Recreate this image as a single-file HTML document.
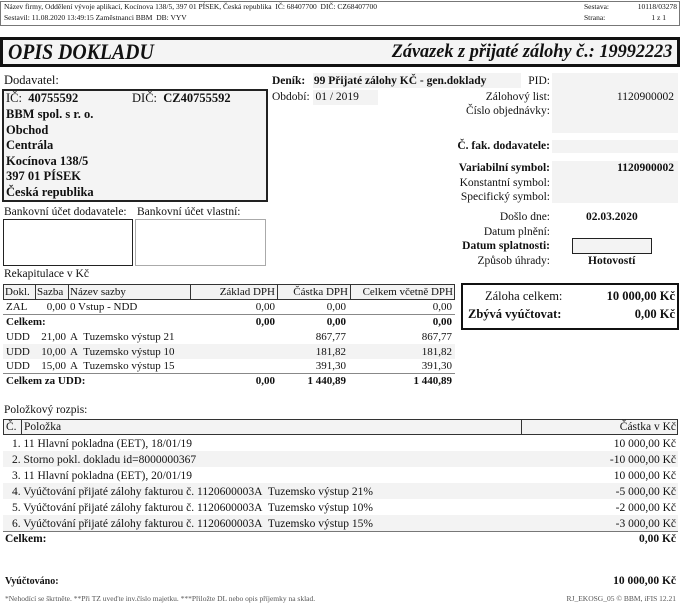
<!DOCTYPE html>
<html><head><meta charset="utf-8"><style>
*{margin:0;padding:0;box-sizing:border-box}
body{width:680px;height:604px;background:#fff;position:relative;overflow:hidden;font-family:"Liberation Serif","DejaVu Serif",serif;font-size:11.5px;color:#111}
.a{position:absolute;white-space:nowrap;line-height:14px}
.b{font-weight:bold}
.r{text-align:right}
.g{position:absolute;background:#f3f3f3}
.sm{font-size:7.5px;line-height:10px}
.t{font-size:11px}
</style></head><body>
<!-- header -->
<div style="position:absolute;left:0;top:1px;width:680px;height:25px;border:1px solid #777"></div>
<div class="a sm" style="left:4px;top:2px">Název firmy, Oddělení vývoje aplikací, Kocínova 138/5, 397 01 PÍSEK, Česká republika&nbsp; IČ: 68407700&nbsp; DIČ: CZ68407700</div>
<div class="a sm" style="left:4px;top:13px">Sestavil: 11.08.2020 13:49:15 Zaměstnanci BBM&nbsp; DB: VYV</div>
<div class="a sm" style="left:584px;top:2px">Sestava:</div>
<div class="a sm" style="left:584px;top:13px">Strana:</div>
<div class="a sm r" style="left:620px;width:57px;top:2px">10118/03278</div>
<div class="a sm r" style="left:620px;width:46px;top:13px">1 z 1</div>
<!-- title -->
<div style="position:absolute;left:0;top:37px;width:680px;height:30px;border:3px solid #111;background:#f4f4f4"></div>
<div class="a b" style="left:8px;top:40px;font-size:22px;line-height:24px;font-style:italic;transform:scaleX(0.9);transform-origin:left">OPIS DOKLADU</div>
<div class="a b r" style="right:8px;top:41px;font-size:19px;line-height:22px;font-style:italic;transform:scaleX(0.96);transform-origin:right">Závazek z přijaté zálohy č.: 19992223</div>
<!-- dodavatel -->
<div class="a" style="left:4px;top:73px;font-size:12.5px">Dodavatel:</div>
<div style="position:absolute;left:2px;top:89px;width:266px;height:113px;border:2px solid #222;background:#f4f4f4"></div>
<div class="a" style="left:6px;top:91px;font-size:12.5px">IČ:&nbsp; <b>40755592</b></div>
<div class="a" style="left:132px;top:91px;font-size:12.5px">DIČ:&nbsp; <b>CZ40755592</b></div>
<div class="a b" style="left:6px;top:107px;font-size:12.5px;line-height:15.5px">BBM spol. s r. o.<br>Obchod<br>Centrála<br>Kocínova 138/5<br>397 01 PÍSEK<br>Česká republika</div>
<div class="a" style="left:4px;top:205px">Bankovní účet dodavatele:</div>
<div class="a" style="left:137px;top:205px">Bankovní účet vlastní:</div>
<div style="position:absolute;left:3px;top:219px;width:130px;height:47px;border:1px solid #222"></div>
<div style="position:absolute;left:135px;top:219px;width:131px;height:47px;border:1px solid #aaa"></div>
<!-- middle/right -->
<div class="g" style="left:313px;top:73px;width:208px;height:15px"></div>
<div class="a b" style="left:272px;top:74px">Deník:&nbsp;&nbsp; 99 Přijaté zálohy KČ - gen.doklady</div>
<div class="a r" style="left:480px;width:70px;top:74px">PID:</div>
<div class="g" style="left:313px;top:90px;width:65px;height:15px"></div>
<div class="a" style="left:272px;top:90px">Období:&nbsp; 01 / 2019</div>
<div class="g" style="left:552px;top:73px;width:126px;height:60px"></div>
<div class="a r" style="left:400px;width:150px;top:90px">Zálohový list:</div>
<div class="a r" style="left:560px;width:114px;top:90px">1120900002</div>
<div class="a r" style="left:400px;width:150px;top:104px">Číslo objednávky:</div>
<div class="g" style="left:552px;top:140px;width:126px;height:13px"></div>
<div class="a b r" style="left:400px;width:150px;top:139px">Č. fak. dodavatele:</div>
<div class="g" style="left:552px;top:161px;width:126px;height:42px"></div>
<div class="a b r" style="left:400px;width:150px;top:161px">Variabilní symbol:</div>
<div class="a b r" style="left:560px;width:114px;top:161px">1120900002</div>
<div class="a r" style="left:400px;width:150px;top:176px">Konstantní symbol:</div>
<div class="a r" style="left:400px;width:150px;top:190px">Specifický symbol:</div>
<div class="a r" style="left:400px;width:150px;top:210px">Došlo dne:</div>
<div class="a b" style="left:586px;top:210px">02.03.2020</div>
<div class="a r" style="left:400px;width:150px;top:225px">Datum plnění:</div>
<div class="a b r" style="left:400px;width:150px;top:239px">Datum splatnosti:</div>
<div style="position:absolute;left:572px;top:238px;width:80px;height:16px;border:1px solid #222;background:#f3f3f3"></div>
<div class="a r" style="left:400px;width:150px;top:254px">Způsob úhrady:</div>
<div class="a b" style="left:588px;top:254px">Hotovostí</div>
<!-- rekapitulace -->
<div class="a" style="left:4px;top:267px">Rekapitulace v Kč</div>
<div style="position:absolute;left:3px;top:284px;width:452px;height:16px;border:1px solid #333;background:#f3f3f3"></div>
<div style="position:absolute;left:35px;top:284px;width:1px;height:16px;background:#333"></div>
<div style="position:absolute;left:68px;top:284px;width:1px;height:16px;background:#333"></div>
<div style="position:absolute;left:190px;top:284px;width:1px;height:16px;background:#333"></div>
<div style="position:absolute;left:277px;top:284px;width:1px;height:16px;background:#333"></div>
<div style="position:absolute;left:350px;top:284px;width:1px;height:16px;background:#333"></div>
<div class="a t" style="left:5px;top:285px">Dokl.</div>
<div class="a t" style="left:37px;top:285px">Sazba</div>
<div class="a t" style="left:70px;top:285px">Název sazby</div>
<div class="a t r" style="left:190px;width:85px;top:285px">Základ DPH</div>
<div class="a t r" style="left:278px;width:70px;top:285px">Částka DPH</div>
<div class="a t r" style="left:350px;width:103px;top:285px">Celkem včetně DPH</div>
<div class="a t" style="left:6px;top:300px">ZAL</div>
<div class="a t r" style="left:35px;width:31px;top:300px">0,00</div>
<div class="a t" style="left:70px;top:300px">0 Vstup - NDD</div>
<div class="a t r" style="left:190px;width:85px;top:300px">0,00</div>
<div class="a t r" style="left:278px;width:68px;top:300px">0,00</div>
<div class="a t r" style="left:350px;width:102px;top:300px">0,00</div>
<div style="position:absolute;left:3px;top:314px;width:452px;height:1px;background:#888"></div>
<div class="a t b" style="left:6px;top:315px">Celkem:</div>
<div class="a t b r" style="left:190px;width:85px;top:315px">0,00</div>
<div class="a t b r" style="left:278px;width:68px;top:315px">0,00</div>
<div class="a t b r" style="left:350px;width:102px;top:315px">0,00</div>
<div class="g" style="left:3px;top:344px;width:452px;height:15px"></div>
<div class="a t" style="left:6px;top:330px;line-height:14.5px">UDD<br>UDD<br>UDD</div>
<div class="a t r" style="left:35px;width:31px;top:330px;line-height:14.5px">21,00<br>10,00<br>15,00</div>
<div class="a t" style="left:70px;top:330px;line-height:14.5px">A&nbsp; Tuzemsko výstup 21<br>A&nbsp; Tuzemsko výstup 10<br>A&nbsp; Tuzemsko výstup 15</div>
<div class="a t r" style="left:278px;width:68px;top:330px;line-height:14.5px">867,77<br>181,82<br>391,30</div>
<div class="a t r" style="left:350px;width:102px;top:330px;line-height:14.5px">867,77<br>181,82<br>391,30</div>
<div style="position:absolute;left:3px;top:373px;width:452px;height:1px;background:#888"></div>
<div class="a t b" style="left:6px;top:374px">Celkem za UDD:</div>
<div class="a t b r" style="left:190px;width:85px;top:374px">0,00</div>
<div class="a t b r" style="left:278px;width:68px;top:374px">1 440,89</div>
<div class="a t b r" style="left:350px;width:102px;top:374px">1 440,89</div>
<!-- záloha box -->
<div style="position:absolute;left:461px;top:283px;width:218px;height:47px;border:2px solid #111"></div>
<div class="a" style="left:485px;top:289px;font-size:12.5px">Záloha celkem:</div>
<div class="a b r" style="left:560px;width:115px;top:289px;font-size:12.5px">10 000,00 Kč</div>
<div class="a b" style="left:468px;top:307px;font-size:12.5px">Zbývá vyúčtovat:</div>
<div class="a b r" style="left:560px;width:115px;top:307px;font-size:12.5px">0,00 Kč</div>
<!-- položkový rozpis -->
<div class="a" style="left:4px;top:403px">Položkový rozpis:</div>
<div style="position:absolute;left:3px;top:419px;width:675px;height:16px;border:1px solid #333;background:#f3f3f3"></div>
<div style="position:absolute;left:21px;top:419px;width:1px;height:16px;background:#333"></div>
<div style="position:absolute;left:521px;top:419px;width:1px;height:16px;background:#333"></div>
<div class="a" style="left:6px;top:420px">Č.</div>
<div class="a" style="left:24px;top:420px">Položka</div>
<div class="a r" style="left:530px;width:146px;top:420px">Částka v Kč</div>
<div class="g" style="left:3px;top:451px;width:675px;height:16px"></div>
<div class="g" style="left:3px;top:483px;width:675px;height:16px"></div>
<div class="g" style="left:3px;top:515px;width:675px;height:16px"></div>
<div class="a" style="left:12px;top:436px;line-height:16px">1. 11 Hlavní pokladna (EET), 18/01/19<br>2. Storno pokl. dokladu id=8000000367<br>3. 11 Hlavní pokladna (EET), 20/01/19<br>4. Vyúčtování přijaté zálohy fakturou č. 1120600003A&nbsp; Tuzemsko výstup 21%<br>5. Vyúčtování přijaté zálohy fakturou č. 1120600003A&nbsp; Tuzemsko výstup 10%<br>6. Vyúčtování přijaté zálohy fakturou č. 1120600003A&nbsp; Tuzemsko výstup 15%</div>
<div class="a r" style="left:500px;width:176px;top:436px;line-height:16px">10 000,00 Kč<br>-10 000,00 Kč<br>10 000,00 Kč<br>-5 000,00 Kč<br>-2 000,00 Kč<br>-3 000,00 Kč</div>
<div style="position:absolute;left:3px;top:531px;width:675px;height:1px;background:#777"></div>
<div class="a b" style="left:5px;top:532px">Celkem:</div>
<div class="a b r" style="left:500px;width:176px;top:532px">0,00 Kč</div>
<div class="a b" style="left:5px;top:575px;font-size:10px">Vyúčtováno:</div>
<div class="a b r" style="left:500px;width:176px;top:574px">10 000,00 Kč</div>
<div class="a sm" style="left:5px;top:594px;color:#555">*Nehodící se škrtněte. **Při TZ uveďte inv.číslo majetku. ***Přiložte DL nebo opis příjemky na sklad.</div>
<div class="a sm r" style="left:500px;width:176px;top:594px;color:#555">RJ_EKOSG_05 © BBM, iFIS 12.21</div>
</body></html>
